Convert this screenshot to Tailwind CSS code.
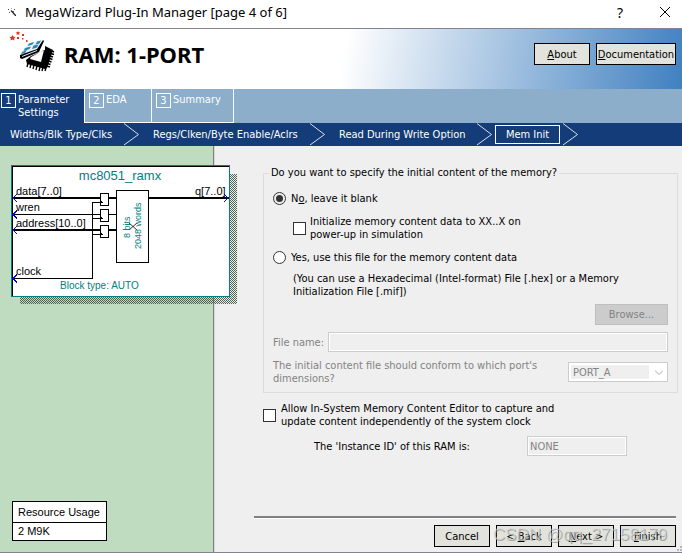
<!DOCTYPE html>
<html lang="en">
  <head>
    <meta charset="UTF-8" />
    <meta name="viewport" content="width=device-width, initial-scale=1.0" />
    <title>MegaWizard Plug-In Manager</title>
    <script src="https://cdn.jsdelivr.net/npm/@tailwindcss/browser@4"></script>
  </head>
  <body
    class="flex min-h-screen flex-col border-b border-[#838390] bg-[#efefef] font-['DejaVu_Sans_Condensed','DejaVu_Sans',sans-serif] text-[11px] leading-[13px] text-black"
  >
    <!-- Title bar -->
    <div class="flex h-[29px] items-center border-b border-[#838390] bg-white pl-2 pb-1">
      <svg class="h-2 w-2" viewBox="0 0 8 8" fill="none" stroke="#555">
        <path d="M3 2.500L8 8" stroke="#222" stroke-width="1.300" />
        <path d="M0 1.500h1M3 0h1M6 1.500h1M1 4.500h1M5 3.500h1" />
      </svg>
      <span class="ml-[9px] grow font-['Noto_Sans',sans-serif] text-[13px] leading-5">MegaWizard Plug-In Manager [page 4 of 6]</span>
      <button class="w-[40px] font-['Noto_Sans',sans-serif] text-[14px]" aria-label="Help">?</button>
      <button class="flex w-[42px] justify-center pl-[8px]" aria-label="Close">
        <svg class="h-[10px] w-[10px]" viewBox="0 0 10 10" fill="none" stroke="#000">
          <path d="M0 0l10 10M10 0L0 10" />
        </svg>
      </button>
    </div>

    <!-- Banner -->
    <header class="flex h-[60px] bg-white">
      <div class="flex w-1/2 gap-2 pl-2">
        <svg class="mt-[2px] h-[46px] w-[48px] shrink-0" viewBox="0 0 48 46">
          <!-- stars -->
          <g fill="#e0301e">
            <path d="M4.500 4l1 1.800 2 .2-1.400 1.400.4 2-2-.900-2 .900.4-2L1.500 6l2-.2z" />
            <path d="M10 0l.7 1.300 1.600.2-1.200 1 .3 1.500-1.400-.7-1.400.7.3-1.500-1.200-1 1.600-.2z" />
            <path d="M9 6h2v2H9zM14 3h2v2h-2zM14 7h1.500v1.500H14zM18 9h1.500v2H18z" />
          </g>
          <!-- chip -->
          <path fill-rule="evenodd" d="M37 15l8 4-6 18-2 1-18-5-1-4 5-4 14-6zM23 26l-1 2 11 3 3-12z" fill="#000" />
          <path d="M44 20l2 1M43 22.500l3 1M42 25l3 1M41.500 27.500l3 1M40.500 30l3 1M39.500 32.500l3 1M39 35l3 1M20 32l-1 4M23 33l-1 4M26 34l-1 4M29 35l-1 4M32 36l-1 4M35 36l-1 4M38 37l-1 3" stroke="#000" stroke-width="1.400" />
          <!-- die floating over the chip -->
          <path d="M13 22l8-10 14-3-5 10-17 7z" fill="#e8f2f8" />
          <path d="M21 12.500l5-1.500-1.500 2.500-5 1.500zM29 10.500l4-1-1.500 3-4 1zM17 17l6-1.500-1.500 2.500-6 2zM25.500 14.500l5-1-1.500 3-5 1.500zM14 21l5-2-2 3-4 1z" fill="#2c83b5" />
          <path d="M35 9l1 1-5 11-17 7-2-1v-3l17-6z" fill="#000" />
          <path d="M14 25.500L29 19.500" stroke="#dceaf2" fill="none" />
        </svg>
        <h1 class="mt-[9px] font-['Noto_Sans',sans-serif] text-[22px] leading-8 font-bold whitespace-nowrap">RAM: 1-PORT</h1>
      </div>
      <div class="flex w-1/2 items-start justify-end gap-[6px] bg-linear-[100deg] from-white from-2% to-[#4080c0] pt-[14px] pr-[6px]">
        <button class="h-[22px] w-[56px] border border-black bg-[#e1e3dc]"><u>A</u>bout</button>
        <button class="h-[22px] w-[80px] border border-black bg-[#e1e3dc]"><u>D</u>ocumentation</button>
      </div>
    </header>

    <!-- Steps -->
    <nav class="flex h-[34px] bg-[#8caecb] text-white">
      <a href="#" class="flex w-[84px] gap-[2px] bg-[#143c78] pt-1 pl-[1px]">
        <span class="h-[15px] w-[15px] border border-white text-center">1</span>
        <span>Parameter<br />Settings</span>
      </a>
      <a href="#" class="flex w-[68px] gap-[2px] border-r border-b border-l border-white pt-1 pl-1">
        <span class="h-[15px] w-[15px] border border-white text-center">2</span>
        <span>EDA</span>
      </a>
      <a href="#" class="flex w-[82px] gap-[2px] border-r border-b border-white pt-1 pl-1">
        <span class="h-[15px] w-[15px] border border-white text-center">3</span>
        <span>Summary</span>
      </a>
    </nav>

    <!-- Pages of the current step -->
    <nav class="flex h-[23px] items-center bg-[#143c78] whitespace-nowrap text-white">
      <a href="#" class="w-[124px] pl-[10px]">Widths/Blk Type/Clks</a>
      <svg class="h-[23px] w-[15px]" viewBox="0 0 15 23" fill="none" stroke="#d6dfeb"><path d="M0 .500l14.500 11L0 22" /></svg>
      <a href="#" class="w-[171px] pl-[14px]">Regs/Clken/Byte Enable/Aclrs</a>
      <svg class="h-[23px] w-[15px]" viewBox="0 0 15 23" fill="none" stroke="#d6dfeb"><path d="M0 .500l14.500 11L0 22" /></svg>
      <a href="#" class="w-[152px] pl-[14px]">Read During Write Option</a>
      <svg class="h-[23px] w-[15px]" viewBox="0 0 15 23" fill="none" stroke="#d6dfeb"><path d="M0 .500l14.500 11L0 22" /></svg>
      <a href="#" class="mx-[3px] h-[19px] w-[65px] border border-white text-center leading-[18px]">Mem Init</a>
      <svg class="h-[23px] w-[15px]" viewBox="0 0 15 23" fill="none" stroke="#d6dfeb"><path d="M0 .500l14.500 11L0 22" /></svg>
    </nav>

    <div class="flex grow">
      <!-- Symbol and resource usage -->
      <aside class="flex w-[214px] shrink-0 flex-col justify-between border-r border-[#808080] bg-[#c0dcc0] pt-[19px] pb-[11px] pl-[11px]">
        <svg class="relative z-10 h-[139px] w-[226px] shrink-0 font-['Liberation_Sans',sans-serif]" viewBox="0 0 226 139" shape-rendering="crispEdges">
          <defs>
            <pattern id="dither" width="2" height="2" patternUnits="userSpaceOnUse">
              <path d="M0 0h1v1H0zM1 1h1v1H1z" fill="#4a6450" />
            </pattern>
          </defs>
          <rect x="9" y="9" width="217" height="130" fill="url(#dither)" />
          <rect x=".5" y=".5" width="218" height="131" fill="#fff" stroke="#008080" />
          <path d="M1.500 131V1.500H218" fill="none" stroke="#000" />
          <g stroke="#000" fill="none">
            <path d="M2 33h103M137 33h81M2 65h103" stroke-width="2" />
            <path d="M2 49.500h103M2 113.500h79.500V37.500H89M81.500 53.500H89M81.500 69.500H89" />
            <rect x="105.500" y="25.500" width="32" height="72" fill="#fff" />
            <rect x="89.500" y="28.500" width="8" height="12" fill="#fff" />
            <rect x="89.500" y="44.500" width="8" height="12" fill="#fff" />
            <rect x="89.500" y="60.500" width="8" height="12" fill="#fff" />
            <path d="M89 36l2 1.500-2 1.500M89 52l2 1.500-2 1.500M89 68l2 1.500-2 1.500" />
            <path d="M118 58l8 7M126 58l-8 7" stroke-width=".8" shape-rendering="auto" />
          </g>
          <path d="M6 29l-4 4 4 4M6 45.500l-4 4 4 4M6 61l-4 4 4 4M6 109.500l-4 4 4 4M213 29l4 4-4 4" stroke="#0000e0" fill="none" />
          <g font-size="11" fill="#000">
            <text x="5" y="30">data[7..0]</text>
            <text x="5" y="46">wren</text>
            <text x="5" y="62">address[10..0]</text>
            <text x="5" y="110">clock</text>
            <text x="184" y="30">q[7..0]</text>
          </g>
          <g fill="#008080">
            <text x="109" y="15" font-size="13" text-anchor="middle">mc8051_ramx</text>
            <text x="49" y="124" font-size="10">Block type: AUTO</text>
            <text transform="translate(119 73) rotate(-90)" font-size="9">8 bits</text>
            <text transform="translate(130 84) rotate(-90)" font-size="9">2048 words</text>
          </g>
        </svg>
        <table class="ml-[1px] w-[95px] border-collapse bg-white font-['Liberation_Sans',sans-serif]">
          <tr><th class="h-[21px] border border-black pl-[5px] text-left font-normal whitespace-nowrap">Resource Usage</th></tr>
          <tr><td class="h-[18px] border border-black pl-[5px]">2 M9K</td></tr>
        </table>
      </aside>

      <!-- Options -->
      <main class="flex grow flex-col border-l border-[#d8d8d8] pt-5 pr-1 pb-[5px] pl-[39px]">
        <fieldset class="ml-[9px] border border-[#dcdcdc] px-[9px] pb-[7px]">
          <legend class="-ml-[4px] px-[2px] leading-[14px]">Do you want to specify the initial content of the memory?</legend>
          <label class="mt-3 flex items-center gap-[5px]">
            <input type="radio" name="content" checked class="h-[13px] w-[13px] appearance-none rounded-full border border-[#333] bg-white bg-clip-content p-[2px] checked:bg-[#333]" />
            <span>N<u>o</u>, leave it blank</span>
          </label>
          <label class="mt-[10px] ml-5 flex items-center gap-1">
            <input type="checkbox" class="h-[13px] w-[13px] appearance-none border border-[#333] bg-white" />
            <span>Initialize memory content data to XX..X on<br />power-up in simulation</span>
          </label>
          <label class="mt-[10px] flex items-center gap-[5px]">
            <input type="radio" name="content" class="h-[13px] w-[13px] appearance-none rounded-full border border-[#333] bg-white" />
            <span>Yes, use this file for the memory content data</span>
          </label>
          <p class="mt-2 ml-5">(You can use a Hexadecimal (Intel-format) File [.hex] or a Memory<br />Initialization File [.mif])</p>
          <div class="mt-[6px] flex justify-end">
            <button disabled class="h-[21px] w-[73px] border border-[#bfbfbf] bg-[#ccc] text-[#838383]">Browse...</button>
          </div>
          <div class="mt-[7px] flex items-center text-[#838383]">
            <label for="fileName" class="w-[55px] whitespace-nowrap">File name:</label>
            <input id="fileName" type="text" disabled class="h-5 grow border border-[#ccc] bg-[#efefef] shadow-[inset_0_0_0_1px_#fff]" />
          </div>
          <div class="mt-[7px] flex items-center justify-between text-[#838383]">
            <label for="port">The initial content file should conform to which port's<br />dimensions?</label>
            <div class="relative">
              <select id="port" disabled class="h-5 w-[100px] appearance-none border border-[#ccc] bg-[#efefef] pl-1 opacity-100 shadow-[inset_0_0_0_2px_#fff,inset_-18px_0_0_#fff]">
                <option>PORT_A</option>
              </select>
              <svg class="pointer-events-none absolute top-[8px] right-[5px] h-[5px] w-[8px]" viewBox="0 0 8 5" fill="none" stroke="#aaa"><path d="M0 .500l4 4 4-4" /></svg>
            </div>
          </div>
        </fieldset>

        <label class="mt-[9px] ml-[9px] flex items-center gap-[5px]">
          <input type="checkbox" class="h-[13px] w-[13px] appearance-none border border-[#333] bg-white" />
          <span>Allow In-System Memory Content Editor to capture and<br />update content independently of the system clock</span>
        </label>
        <div class="mt-2 ml-[60px] flex items-center">
          <label for="instanceId" class="w-[213px]">The 'Instance ID' of this RAM is:</label>
          <input id="instanceId" type="text" value="NONE" disabled class="h-5 w-[100px] border border-[#ccc] bg-[#efefef] pl-[2px] text-[#838383] shadow-[inset_0_0_0_1px_#fff]" />
        </div>

        <!-- Footer buttons -->
        <footer class="relative mt-auto mr-[2px] flex justify-end gap-[6px] border-t-2 border-[#808080] pt-[7px] shadow-[inset_0_1px_0_#fff]">
          <button class="h-[22px] w-[56px] border border-black bg-[#e1e3dc]">Cancel</button>
          <button class="h-[22px] w-[56px] border border-black bg-[#e1e3dc]">&lt; <u>B</u>ack</button>
          <button class="h-[22px] w-[56px] border border-black bg-[#e1e3dc]"><u>N</u>ext &gt;</button>
          <button class="h-[22px] w-[56px] border border-black bg-[#e1e3dc]"><u>F</u>inish</button>
          <span class="pointer-events-none absolute right-[9px] bottom-[2px] font-['Liberation_Sans',sans-serif] text-[17px] leading-[20px] whitespace-nowrap text-[#dcdcdc]/60 [text-shadow:1px_1px_0_#808080a0]">CSDN @qq_27158179</span>
          <!-- resize grip -->
          <svg class="absolute -right-[6px] -bottom-[4px] h-[5px] w-[5px]" viewBox="0 0 5 5" fill="#b8b8b8"><path d="M3 0h2v2H3zM0 3h2v2H0zM3 3h2v2H3z" /></svg>
        </footer>
      </main>
    </div>
  </body>
</html>
